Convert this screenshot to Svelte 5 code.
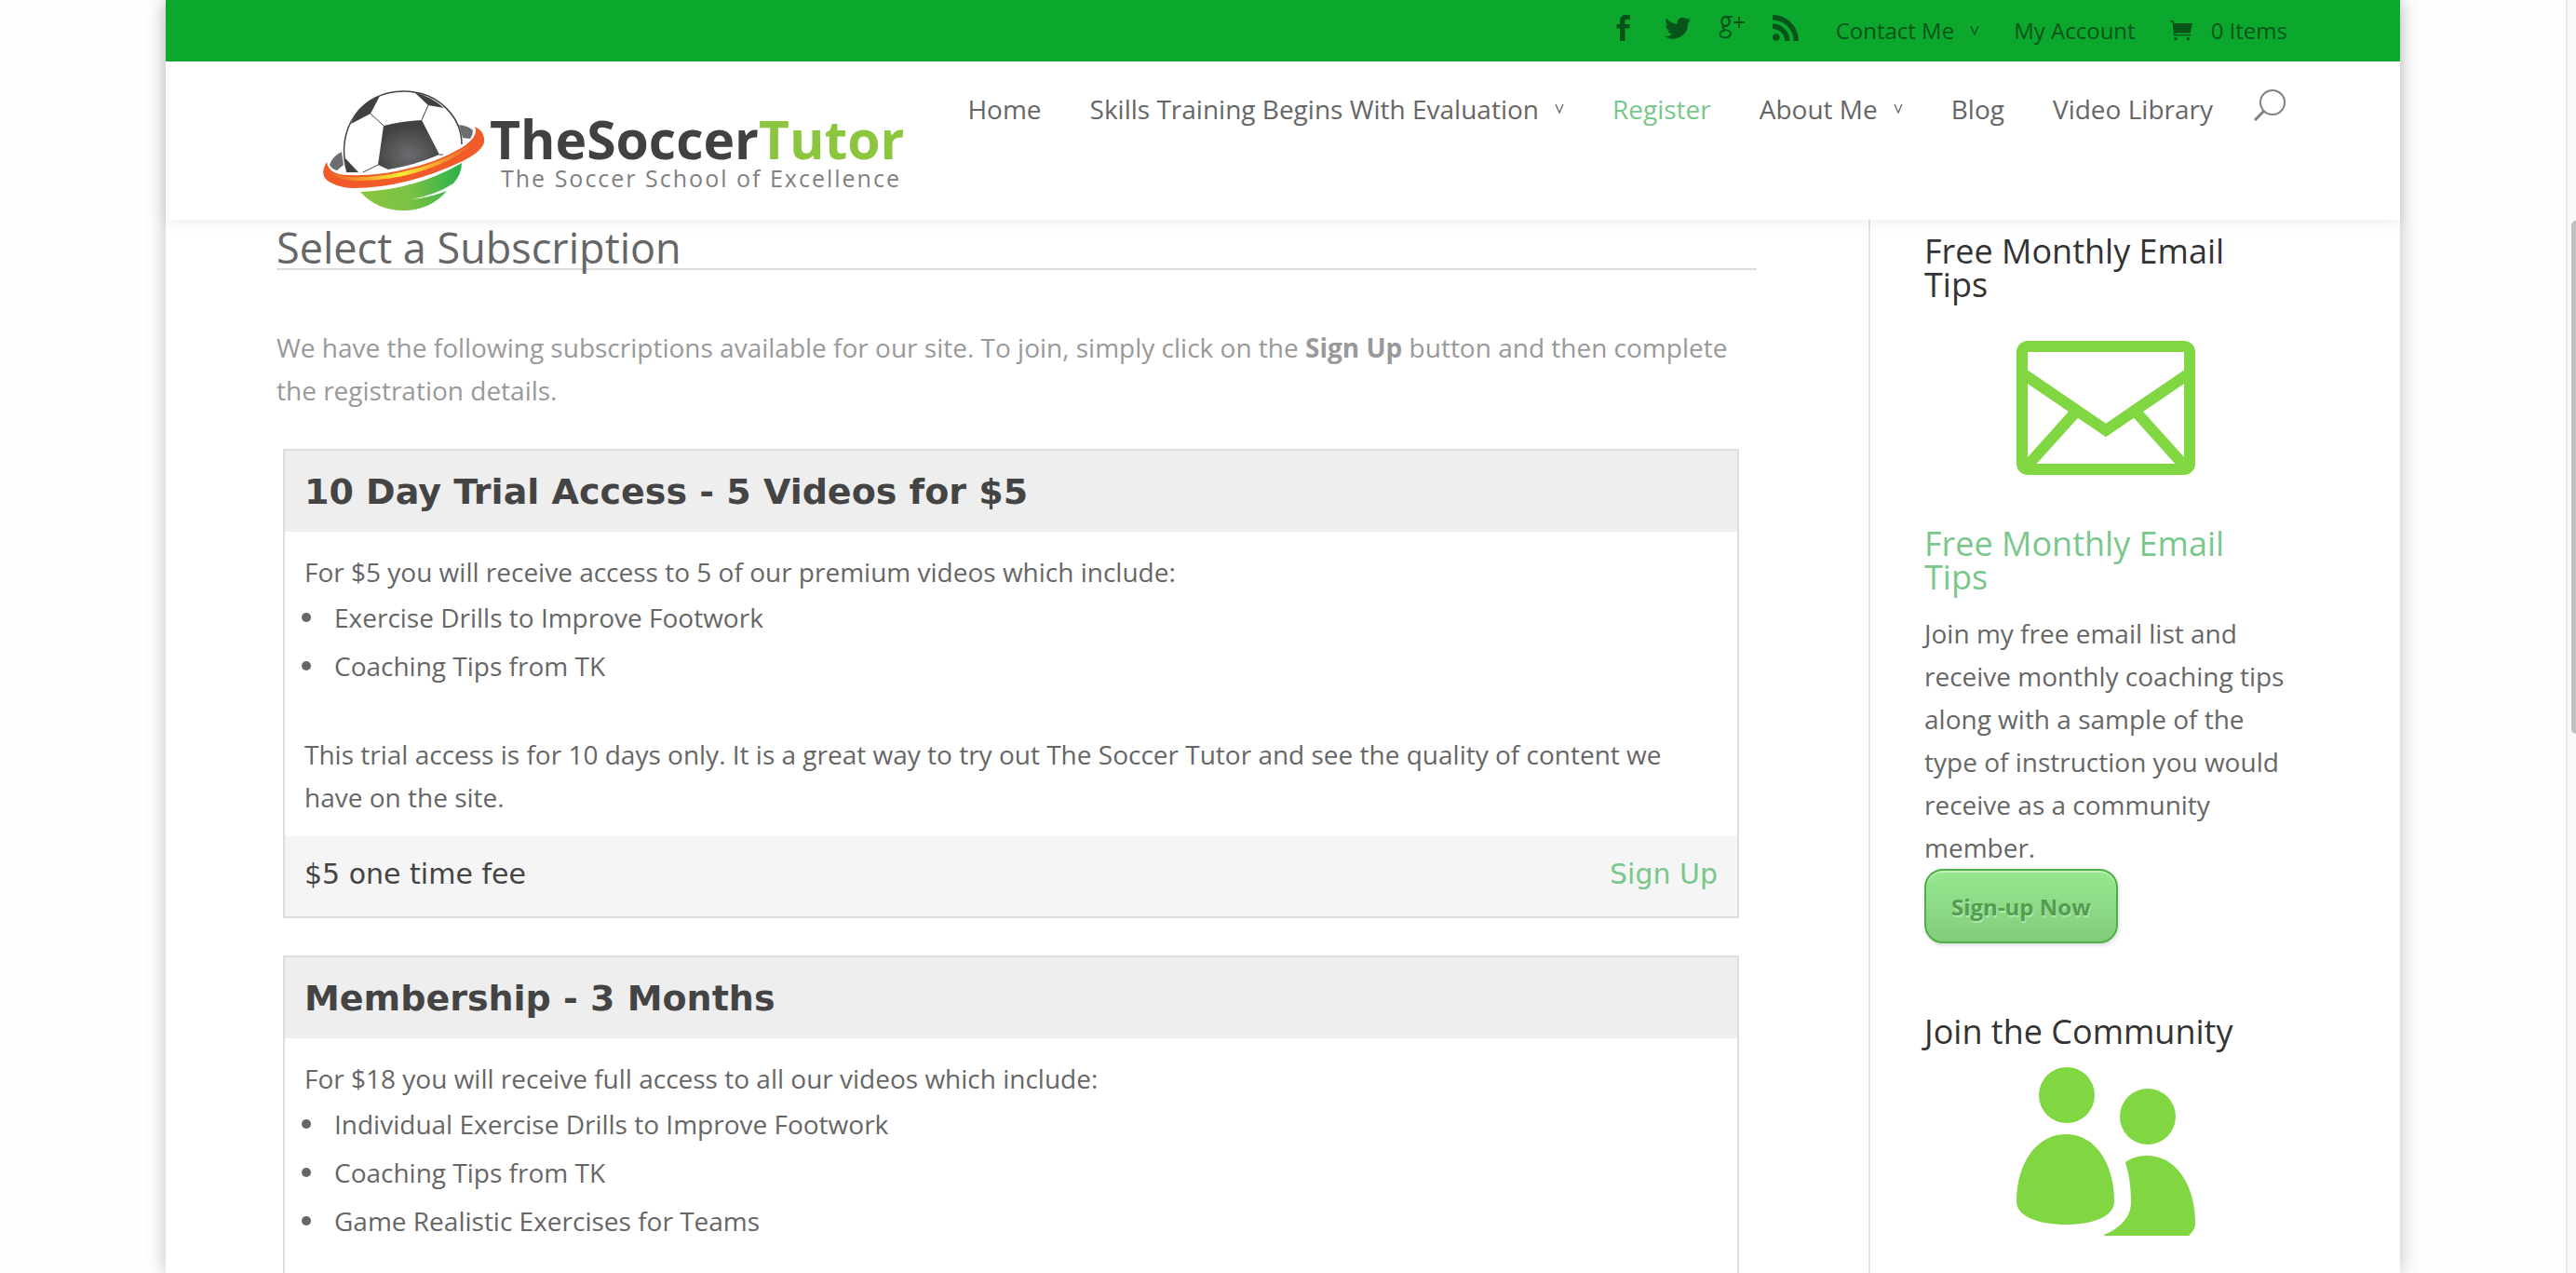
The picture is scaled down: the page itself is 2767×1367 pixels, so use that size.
<script>
  const plans = [
    {
      title: '10 Day Trial Access - 5 Videos for $5',
      intro: 'For $5 you will receive access to 5 of our premium videos which include:',
      items: ['Exercise Drills to Improve Footwork', 'Coaching Tips from TK'],
      note: 'This trial access is for 10 days only. It is a great way to try out The Soccer Tutor and see the quality of content we have on the site.',
      price: '$5 one time fee'
    },
    {
      title: 'Membership - 3 Months',
      intro: 'For $18 you will receive full access to all our videos which include:',
      items: [
        'Individual Exercise Drills to Improve Footwork',
        'Coaching Tips from TK',
        'Game Realistic Exercises for Teams'
      ]
    }
  ];

  const nav = [
    { label: 'Home' },
    { label: 'Skills Training Begins With Evaluation', menu: true },
    { label: 'Register', current: true },
    { label: 'About Me', menu: true },
    { label: 'Blog' },
    { label: 'Video Library' }
  ];
</script>

{#snippet chevron()}
  <svg class="chevron" viewBox="0 0 10 10" aria-hidden="true"><path d="M1 0l4 9 4-9" fill="none" stroke="currentColor" stroke-width="1.3" /></svg>
{/snippet}

<div class="window">
  <div class="page">
    <header>
      <div class="topbar">
        <a href="#facebook" class="social" aria-label="Facebook">
          <svg viewBox="0 0 28 28"><path d="M10 28V14.500H6.500v-4.500H10V7c0-5 2-7 6-7h5v4.700h-3c-1.800 0-2.500.7-2.500 2.300v3H21l-.7 4.500h-4.800V28z" fill="currentColor" /></svg>
        </a>
        <a href="#twitter" class="social" aria-label="Twitter">
          <svg viewBox="0 0 28 28"><path d="M28 5.500a12 12 0 0 1-3.300.9 6 6 0 0 0 2.500-3.200 12 12 0 0 1-3.600 1.400A5.800 5.800 0 0 0 13.700 9.800 16.300 16.300 0 0 1 2 3.800a5.800 5.800 0 0 0 1.800 7.700 6 6 0 0 1-2.600-.7 5.800 5.800 0 0 0 4.600 5.700 6 6 0 0 1-2.600.1 5.800 5.800 0 0 0 5.400 4A11.600 11.600 0 0 1 0 23a16.300 16.300 0 0 0 25.100-14.500A12 12 0 0 0 28 5.500z" fill="currentColor" /></svg>
        </a>
        <a href="#google" class="social" aria-label="Google Plus">
          <svg viewBox="0 0 28 28" fill="none" stroke="currentColor">
            <ellipse cx="7.500" cy="7" rx="4.200" ry="5" stroke-width="2.400" />
            <path d="M5.500 11.500c-2.500 2 0 3.800 2.500 4.500 3.500 1 5.500 2.300 5 4.500-.6 2.800-3.500 3.800-6 3.800s-5.500-1-5.500-3.600 2.500-3.700 5.500-4.200M9 1.800h6" stroke-width="1.800" />
            <path d="M22 2v12M16 8h12" stroke-width="1.800" />
          </svg>
        </a>
        <a href="#rss" class="social" aria-label="RSS">
          <svg viewBox="0 0 28 28"><circle cx="3.800" cy="24" r="3.800" fill="currentColor" /><path d="M0 2.700A25.300 25.300 0 0 1 25.300 28M0 12.200A15.800 15.800 0 0 1 15.800 28" fill="none" stroke="currentColor" stroke-width="5.400" /></svg>
        </a>
        <a href="#contact" class="link first">Contact Me {@render chevron()}</a>
        <a href="#account" class="link">My Account</a>
        <a href="#cart" class="link cart">
          <svg viewBox="0 0 24 22" aria-hidden="true"><path d="M0 0h3.500l.8 3H24l-2.300 10.500H5.500l.3 1.500H22v1.500H4L2.500 1.500H0z" fill="currentColor" /><circle cx="6" cy="19.800" r="1.800" fill="currentColor" /><circle cx="19.500" cy="19.800" r="1.800" fill="currentColor" /></svg>
          0 Items
        </a>
      </div>

      <div class="mainbar">
        <a href="#home" class="logo" aria-label="TheSoccerTutor home">
          <svg viewBox="0 0 174 132" aria-hidden="true">
            <defs>
              <linearGradient id="ring" x1="0" x2="1"><stop offset="0" stop-color="#f15a29" /><stop offset=".5" stop-color="#f9ed32" /><stop offset="1" stop-color="#f15a29" /></linearGradient>
              <linearGradient id="bowl" x1="0" x2="1"><stop offset="0" stop-color="#8cc63f" /><stop offset=".5" stop-color="#7ac143" /><stop offset="1" stop-color="#2bb24c" /></linearGradient>
              <radialGradient id="panel" cx=".5" cy=".7" r=".6"><stop offset="0" stop-color="#6b6c6f" /><stop offset="1" stop-color="#414142" /></radialGradient>
            </defs>
            <path d="M21 67Q11 72 8 81q3 5 8 6l7-6zM147 38q10 1 15 6 0 5-3 9l-8-1z" fill="#6d6e71" />
            <path d="M27 89C13 42 43 2 87 2c40 0 63 30 63 57" fill="#fff" stroke="#414142" stroke-width="1.500" />
            <path d="M31 37Q41 14 62 7L52 26zM99 3q19 5 32 17l-17-3zM24 73l15 16H27z" fill="#414142" />
            <path d="M66 39q20-5 41-6l19 37q-25 11-55 16l-11-5z" fill="url(#panel)" />
            <path d="M52 26l14 13M107 33l7-16M60 81l-16 8M126 70l4 0" fill="none" stroke="#414142" stroke-width="1" />
            <path d="M41 110Q100 108 150 79q0 12-9 22-18 12-45 17 20-2 38-9-18 21-47 21-28 0-46-20z" fill="url(#bowl)" />
            <path d="M5 78Q-5 94 11 101q10 5 23 5 55 0 117-29 26-13 23-25-2-9-10-12 5 10-13 22-28 17-67 25-26 6-55 5Q7 92 5 78z" fill="#f15a29" />
            <path d="M6 84q6 14 33 14c50 0 92-17 112-31q10-6 13-14-4 6-13 11-28 17-67 25-26 6-55 5Q10 92 6 84z" fill="url(#ring)" />
          </svg>
          <span class="words">
            <span class="name">TheSoccer<em>Tutor</em></span>
            <span class="tag">The Soccer School of Excellence</span>
          </span>
        </a>
        <nav>
          {#each nav as item}
            <a href="#{item.label}" class:current={item.current}>{item.label}{#if item.menu}{@render chevron()}{/if}</a>
          {/each}
          <button aria-label="Search">
            <svg viewBox="0 0 36 34"><circle cx="20" cy="14" r="13" fill="none" stroke="currentColor" stroke-width="2" /><path d="M11 23L1 33" stroke="currentColor" stroke-width="3" /></svg>
          </button>
        </nav>
      </div>
    </header>

    <div class="columns">
      <main>
        <h1>Select a Subscription</h1>
        <p class="lead">We have the following subscriptions available for our site. To join, simply click on the <strong>Sign Up</strong> button and then complete the registration details.</p>
        {#each plans as plan}
          <section class="plan">
            <h2>{plan.title}</h2>
            <div class="body">
              <p>{plan.intro}</p>
              <ul>
                {#each plan.items as item}<li>{item}</li>{/each}
              </ul>
              {#if plan.note}<p>{plan.note}</p>{/if}
            </div>
            {#if plan.price}
              <div class="foot"><span>{plan.price}</span><a href="#signup">Sign Up</a></div>
            {/if}
          </section>
        {/each}
      </main>

      <aside>
        <h3>Free Monthly Email Tips</h3>
        <svg class="art mail" viewBox="0 0 192 144" aria-hidden="true">
          <rect x="6" y="6" width="180" height="132" rx="6" fill="none" stroke="#81d742" stroke-width="12" />
          <path d="M8 36l88 60 88-60M64 76L10 136M128 76l54 60" fill="none" stroke="#81d742" stroke-width="12" />
        </svg>
        <h3 class="green"><a href="#tips">Free Monthly Email Tips</a></h3>
        <p>Join my free email list and receive monthly coaching tips along with a sample of the type of instruction you would receive as a community member.</p>
        <button class="signup">Sign-up Now</button>
        <h3 class="community">Join the Community</h3>
        <svg class="art" viewBox="0 0 192 181" fill="#81d742" aria-hidden="true">
          <circle cx="54" cy="30" r="30" />
          <circle cx="141" cy="53" r="30" />
          <path d="M53 72c32 0 52 32 52 72 0 16-22 25-52 25S0 160 0 144c0-40 21-72 53-72z" />
          <path d="M117 102q10-7 23-7c32 0 52 32 52 73 0 5-3 9-7 13H94v-1c19-8 29-20 29-35q0-24-6-43z" />
        </svg>
      </aside>
    </div>
  </div>
  <div class="scrollbar"><div class="thumb"></div></div>
</div>

<style>
  :global(body) {
    margin: 0;
    overflow: hidden;
  }
  .window {
    height: 100vh;
    display: flex;
    overflow: hidden;
    background: #fefefe;
    color: #666;
    font: 28px/46px 'Open Sans', sans-serif;
  }
  a {
    color: inherit;
    text-decoration: none;
  }
  h1, h2, h3, p, ul {
    margin: 0;
    padding: 0;
    font-weight: 400;
  }
  .page {
    flex: 1;
    max-width: 2400px;
    margin: 0 auto;
    background: #fff;
    box-shadow: 0 0 20px rgba(0, 0, 0, 0.25);
  }
  header {
    position: relative;
    z-index: 1;
    background: #fff;
    box-shadow: 0 2px 14px rgba(0, 0, 0, 0.08);
  }
  .topbar {
    height: 66px;
    box-sizing: border-box;
    padding: 0 121px;
    display: flex;
    justify-content: flex-end;
    align-items: center;
    background: #0ca82d;
    color: #06541a;
    font-size: 24px;
  }
  .social {
    width: 28px;
    margin-right: 30px;
    padding-bottom: 6px;
  }
  .social svg {
    display: block;
    width: 28px;
    height: 28px;
  }
  .link {
    display: flex;
    align-items: center;
    margin-left: 37px;
  }
  .link.first {
    margin-left: 10px;
  }
  .cart svg {
    width: 24px;
    height: 22px;
    margin-right: 20px;
  }
  .chevron {
    width: 10px;
    height: 10px;
    margin-left: 17px;
  }
  .mainbar {
    height: 170px;
    box-sizing: border-box;
    padding: 27px 121px 0 168px;
    display: flex;
    justify-content: space-between;
    align-items: flex-start;
  }
  .logo {
    display: flex;
    margin-top: 3px;
  }
  .logo svg {
    width: 174px;
    height: 132px;
  }
  .words {
    display: flex;
    flex-direction: column;
    margin-left: 6px;
    padding-top: 24px;
  }
  .name {
    color: #414142;
    font-size: 57px;
    font-weight: 700;
    line-height: 58px;
  }
  .name em {
    color: #8cc63f;
    font-style: normal;
  }
  .tag {
    padding-left: 12px;
    color: #808080;
    font-size: 25px;
    line-height: 26px;
    letter-spacing: 2px;
  }
  nav {
    display: flex;
    align-items: center;
    gap: 52px;
    line-height: 48px;
  }
  nav a {
    display: flex;
    align-items: center;
    white-space: nowrap;
  }
  nav .current,
  .green,
  .foot a {
    color: #7ac78c;
  }
  nav button {
    padding: 0 0 8px;
    margin-left: -8px;
    border: 0;
    background: none;
    color: #808080;
  }
  nav button svg {
    display: block;
    width: 36px;
    height: 34px;
  }
  .columns {
    display: flex;
    padding: 0 121px 0 119px;
  }
  main {
    flex: 1;
    padding-right: 120px;
    border-right: 2px solid #e2e2e2;
  }
  h1 {
    height: 52px;
    margin-bottom: 60px;
    border-bottom: 2px solid #ddd;
    font-size: 45px;
    line-height: 60px;
  }
  .lead {
    margin-bottom: 40px;
    color: #999;
  }
  .plan {
    margin: 0 19px 40px 7px;
    border: 2px solid #ddd;
  }
  h2 {
    padding: 2px 21px 0;
    background: #eee;
    color: #444;
    font: 700 38px/85px 'DejaVu Sans', sans-serif;
  }
  .body {
    padding: 20px 21px 19px;
  }
  ul {
    padding-bottom: 46px;
    list-style: none;
  }
  li {
    display: flex;
    align-items: center;
    line-height: 52px;
  }
  li::before {
    content: '';
    width: 10px;
    height: 10px;
    margin: 0 25px 0 -3px;
    border-radius: 50%;
    background: #666;
  }
  .foot {
    display: flex;
    justify-content: space-between;
    padding: 0 21px 4px;
    background: #f5f5f5;
    color: #444;
    font: 30px/82px 'DejaVu Sans', sans-serif;
  }
  aside {
    width: 390px;
    padding: 16px 0 0 58px;
  }
  h3 {
    color: #333;
    font-size: 36px;
    line-height: 36px;
  }
  h3.green {
    color: #7ac78c;
    margin-bottom: 19px;
  }
  .art {
    display: block;
    width: 192px;
    margin: 20px auto 0;
  }
  .mail {
    margin: 42px auto 56px;
  }
  .signup {
    display: block;
    height: 80px;
    padding: 0 27px;
    border: 2px solid #4caf48;
    border-radius: 20px;
    background: linear-gradient(#96e890, #82cc7c);
    box-shadow: inset 0 2px 0 #bdf0b8, 1px 2px 4px rgba(0, 0, 0, 0.15);
    color: #539d4e;
    font: 700 24px 'Open Sans', sans-serif;
    text-shadow: 1px 2px 1px #b4e8b0;
  }
  .community {
    margin-top: 77px;
  }
  .scrollbar {
    width: 9px;
    border-left: 2px solid #e8e8e8;
    background: #fafafa;
    overflow: hidden;
  }
  .thumb {
    height: 551px;
    margin: 237px 0 0 4px;
    border-radius: 6px 0 0 6px;
    background: #c1c1c1;
  }
</style>
